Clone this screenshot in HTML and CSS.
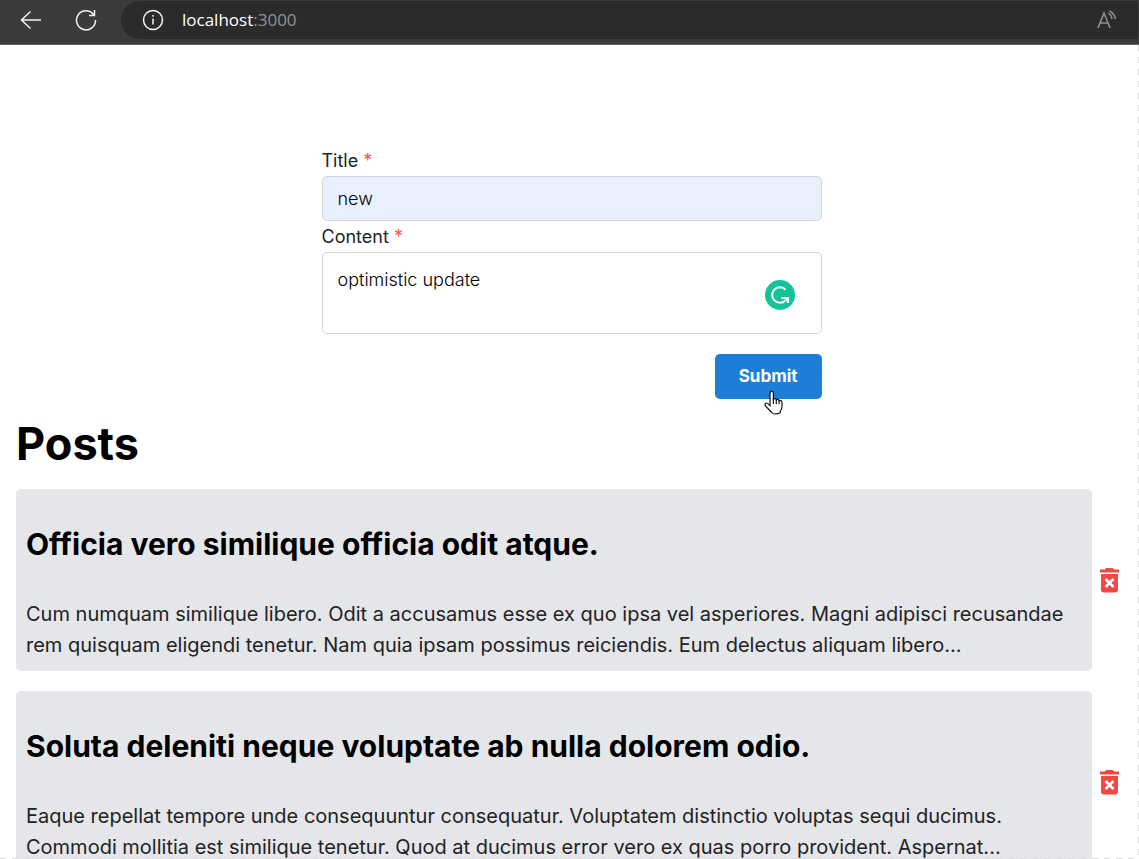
FILE: index.html
```html
<!DOCTYPE html>
<html lang="en">
<head>
<meta charset="utf-8">
<title>Posts</title>
<link rel="stylesheet" href="styles.css">
</head>
<body>
<div class="app">
  <header class="toolbar">
    <button class="tool" type="button" aria-label="Back">
      <svg width="22" height="20" viewBox="0 0 22 20"><path d="M21 10H1.5M10.500 1.500 1.500 10l9 8.500"/></svg>
    </button>
    <button class="tool" type="button" aria-label="Refresh">
      <svg width="22" height="22" viewBox="0 0 22 22"><path d="M18.500 5.500A9.500 9.500 0 1 0 20.500 11M19.500 1v5.500h-5.500"/></svg>
    </button>
    <div class="address">
      <svg width="22" height="22" viewBox="0 0 22 22"><circle cx="11" cy="11" r="9.500"/><path d="M11 9.500v6M11 6v1.800"/></svg>
      <span class="url">localhost<span class="port">:3000</span></span>
      <button class="tool read" type="button" aria-label="Read aloud">
        <svg width="20" height="20" viewBox="0 0 20 20"><path d="M1 18 7 3l6 15M3 13h8M11.500 3q3 2 3.500 6M12.500 1q5 2.500 6 8"/></svg>
      </button>
    </div>
  </header>
  <main class="page">
    <form class="form">
      <label for="title">Title <span class="required">*</span></label>
      <input class="field" id="title" type="text" value="new">
      <label for="content">Content <span class="required">*</span></label>
      <div class="area">
        <textarea class="field" id="content">optimistic update</textarea>
        <svg class="badge" width="30" height="30" viewBox="0 0 30 30"><circle cx="15" cy="15" r="15" fill="#15c39a"/><path d="M20.500 9.800A7.700 7.700 0 1 0 20.300 20.500" fill="none" stroke="#fff" stroke-width="2"/><path d="M16.500 18h6.500v5" fill="none" stroke="#fff" stroke-width="2"/><path d="m23.500 17.500-4 1 3.500 4.500z" fill="#fff"/></svg>
      </div>
      <button class="submit" type="button">Submit
        <svg class="cursor" width="20" height="25" viewBox="0 0 20 25"><path d="M6 15.500V3a1.700 1.700 0 0 1 3.400 0v6q2.200-1 2.900.7 2-.8 2.800.7 2.900-.4 2.900 2v4.100q0 3-1.800 4.600v1.700q-2 1.200-5 1.200-2.500 0-3.600-1.500L1.500 16q-1.200-2.600.7-3 1.500-.2 3.800 2.500z" fill="#fff" stroke="#111" stroke-width="1.200"/><path d="M9.400 9v5M12.300 10v4M15.100 10.500V14" fill="none" stroke="#111" stroke-width="1.200"/></svg>
      </button>
    </form>
    <h1>Posts</h1>
    <section class="posts">
      <div class="row">
        <article class="post">
          <h2>Officia vero similique officia odit atque.</h2>
          <p>Cum numquam similique libero. Odit a accusamus esse ex quo ipsa vel asperiores. Magni adipisci recusandae rem quisquam eligendi tenetur. Nam quia ipsam possimus reiciendis. Eum delectus aliquam libero...</p>
        </article>
        <button class="delete" type="button" aria-label="Delete post">
          <svg width="20" height="25" viewBox="0 0 20 25"><path d="M0 1.500h5L6 0h7l1 1.500h5v3H0zM1 6h17v15.500q0 3-3 3H4q-3 0-3-3z" fill="#f04844"/><path d="m5.500 11 8 8m0-8-8 8" stroke="#fff" stroke-width="2.600"/></svg>
        </button>
      </div>
      <div class="row">
        <article class="post">
          <h2>Soluta deleniti neque voluptate ab nulla dolorem odio.</h2>
          <p>Eaque repellat tempore unde consequuntur consequatur. Voluptatem distinctio voluptas sequi ducimus. Commodi mollitia est similique tenetur. Quod at ducimus error vero ex quas porro provident. Aspernat...</p>
        </article>
        <button class="delete" type="button" aria-label="Delete post">
          <svg width="20" height="25" viewBox="0 0 20 25"><path d="M0 1.500h5L6 0h7l1 1.500h5v3H0zM1 6h17v15.500q0 3-3 3H4q-3 0-3-3z" fill="#f04844"/><path d="m5.500 11 8 8m0-8-8 8" stroke="#fff" stroke-width="2.600"/></svg>
        </button>
      </div>
    </section>
  </main>
  <div class="edge edge-right"></div>
  <div class="edge edge-bottom"></div>
</div>
</body>
</html>
```
FILE: styles.css
```css
* { box-sizing: border-box; }
body { margin: 0; background: #fff; color: #000; font: 400 20px/31px Inter, sans-serif; }
button { border: 0; padding: 0; background: none; font: inherit; }
svg { display: block; flex: none; }
.app { position: relative; height: 100vh; display: flex; flex-direction: column; overflow: hidden; }

.toolbar { flex: none; display: flex; align-items: center; gap: 33px; height: 45px; padding: 0 0 5px 20px; background: #3b3b3b; border-bottom: 1px solid #666; border-top: 1px solid #3b3b3b; }
.toolbar svg { fill: none; stroke: #f4f4f4; stroke-width: 1.500; }
.address { flex: 1; align-self: stretch; display: flex; align-items: center; gap: 18px; margin: 0 1px 0 -9px; padding: 0 21px; background: #2b2b2b; border-radius: 20px 0 0 20px; }
.url { color: #fff; font: 400 17px/24px "Open Sans", sans-serif; }
.port { color: #929096; }
.read { margin-left: auto; }
.toolbar .read svg { stroke: #929292; }

.page { flex: 1; min-height: 0; overflow: hidden; padding: 100px 16px 0; }
.form { display: flex; flex-direction: column; width: 504px; max-width: 100%; margin: 0 auto; padding-left: 4px; }
.form label { color: #212529; font-size: 18px; font-weight: 400; }
.required { color: #fa5252; }
.field { display: block; width: 100%; border: 1px solid #ced4da; border-radius: 5px; padding: 0 15px; background: #fff; color: #000; font: 300 18px/27px Inter, sans-serif; outline: 0; }
input.field { height: 45px; background: #e8f0fe; }
.area { position: relative; }
textarea.field { height: 82px; padding: 13px 15px; resize: none; }
.badge { position: absolute; right: 27px; top: 28px; }
.submit { position: relative; align-self: flex-end; height: 45px; margin-top: 20px; padding: 0 24px; border-radius: 5px; background: #1c7ed6; color: #fff; font-size: 17px; font-weight: 700; }
.cursor { position: absolute; left: 49px; top: 36px; }

h1 { margin: 17px 0; font-size: 45px; line-height: 56px; font-weight: 700; }
.posts { display: flex; flex-direction: column; gap: 20px; }
.row { display: flex; align-items: center; gap: 8px; padding-right: 3px; }
.post { flex: 1; padding: 10px; border-radius: 5px; background: #e5e6ea; }
.post h2 { margin: 25px 0 35px; font-size: 30px; line-height: 40px; font-weight: 700; }
.post p { margin: 0; color: #222; }
.edge { position: absolute; right: 0; bottom: 0; }
.edge-right { width: 1px; height: calc(100% - 45px); background: repeating-linear-gradient(#ddd 0 6px, transparent 6px 12px); }
.edge-bottom { width: 100%; height: 1px; background: repeating-linear-gradient(90deg, #ddd 0 6px, transparent 6px 12px); }
```
